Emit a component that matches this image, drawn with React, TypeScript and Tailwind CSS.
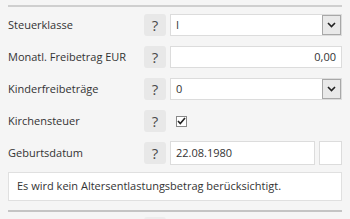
import React from "react";

function HelpButton() {
  return (
    <button className="flex h-[22px] w-[22px] shrink-0 items-center justify-center rounded-[3px] bg-[#e8e8e8] text-[15px] font-normal leading-none text-[#4a4a4a]">
      ?
    </button>
  );
}

function SelectBox({ value }: { value: string }) {
  return (
    <div className="flex h-[22px] flex-1 items-center border border-[#dcdcdc] bg-white pl-[5px]">
      <span className="flex-1 text-[11px] text-[#333]">{value}</span>
      <span className="flex h-[20px] w-[19px] items-center justify-center border border-[#a8a8a8] bg-[#e9e9e9]">
        <svg width="9" height="6" viewBox="0 0 9 6" fill="none">
          <path d="M1 1l3.5 3.5L8 1" stroke="#222" strokeWidth="1.6" />
        </svg>
      </span>
    </div>
  );
}

function Row({ label, children }: { label: string; children: React.ReactNode }) {
  return (
    <div className="flex h-[22px] items-center">
      <div className="w-[136px] shrink-0 text-[11px] text-[#333]">{label}</div>
      <HelpButton />
      <div className="ml-[4px] flex flex-1 items-center">{children}</div>
    </div>
  );
}

export default function App() {
  return (
    <div
      className="h-[219px] w-[350px] overflow-hidden bg-[#f5f5f5] px-[8px] pt-[5px]"
      style={{ fontFamily: '"Open Sans", "Noto Sans", sans-serif' }}
    >
      <div className="h-[2px] bg-[#cfcfcf]" />
      <div className="mt-[7px] flex flex-col gap-[10px]">
        <Row label="Steuerklasse">
          <SelectBox value="I" />
        </Row>
        <Row label="Monatl. Freibetrag EUR">
          <div className="flex h-[22px] flex-1 items-center justify-end border border-[#dcdcdc] bg-white pr-[5px] text-[11px] text-[#333]">
            0,00
          </div>
        </Row>
        <Row label="Kinderfreibeträge">
          <SelectBox value="0" />
        </Row>
        <Row label="Kirchensteuer">
          <span className="ml-[6px] flex h-[11px] w-[11px] items-center justify-center border border-[#888] bg-white">
            <svg width="9" height="8" viewBox="0 0 9 8" fill="none">
              <path d="M1 4l2.3 2.5L8 1" stroke="#222" strokeWidth="1.6" />
            </svg>
          </span>
        </Row>
        <Row label="Geburtsdatum">
          <div className="flex h-[24px] flex-1 items-center border border-[#dcdcdc] bg-white pl-[5px] text-[11px] text-[#333]">
            22.08.1980
          </div>
          <div className="ml-[4px] h-[24px] w-[23px] border border-[#dcdcdc] bg-white" />
        </Row>
      </div>
      <div className="mt-[8px] flex h-[29px] items-center border border-[#e0e0e0] bg-white px-[8px] text-[11px] text-[#333]">
        Es wird kein Altersentlastungsbetrag berücksichtigt.
      </div>
      <div className="mt-[9px] h-[2px] bg-[#c4c4c4]" />
      <div className="mt-[5px] flex">
        <div className="w-[136px]" />
        <div className="h-[22px] w-[22px] rounded-[3px] bg-[#ececec]" />
      </div>
    </div>
  );
}
